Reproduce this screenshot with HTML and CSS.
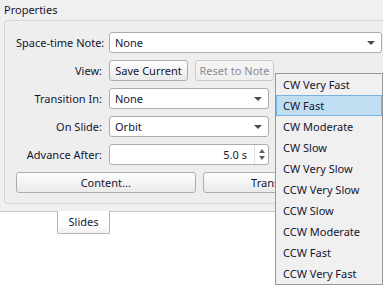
FILE: index.html
```html
<!DOCTYPE html>
<html lang="en">
<head>
    <meta charset="UTF-8">
    <title>Properties</title>
    <link rel="stylesheet" href="styles.css">
</head>
<body>
    <div class="dock">
        <div class="dock-title">Properties</div>
        <div class="group">
            <div class="form">
                <label>Space-time Note:</label>
                <div class="combo wide"><span>None</span><i class="arrow"></i></div>

                <label>View:</label>
                <div class="button-row">
                    <button class="btn">Save Current</button>
                    <button class="btn" disabled>Reset to Note</button>
                </div>

                <label>Transition In:</label>
                <div class="combo"><span>None</span><i class="arrow"></i></div>

                <label>On Slide:</label>
                <div class="combo"><span>Orbit</span><i class="arrow"></i></div>

                <label>Advance After:</label>
                <div class="spin">
                    <span class="spin-value">5.0 s</span>
                    <div class="spin-buttons">
                        <i class="arrow up"></i>
                        <i class="arrow"></i>
                    </div>
                </div>
            </div>
            <div class="actions">
                <button class="btn">Content...</button>
                <button class="btn">Transition Out...</button>
            </div>
        </div>
    </div>
    <div class="tabbar">
        <div class="tab">Slides</div>
    </div>

    <!-- open combo list for "On Slide" -->
    <ul class="popup">
        <li>CW Very Fast</li>
        <li class="current">CW Fast</li>
        <li>CW Moderate</li>
        <li>CW Slow</li>
        <li>CW Very Slow</li>
        <li>CCW Very Slow</li>
        <li>CCW Slow</li>
        <li>CCW Moderate</li>
        <li>CCW Fast</li>
        <li>CCW Very Fast</li>
    </ul>
</body>
</html>
```

FILE: styles.css
```css
body {
    margin: 0;
    width: 383px;
    height: 285px;
    overflow: hidden;
    position: relative;
    background: #ffffff;
    font-family: 'Noto Sans', 'Open Sans', sans-serif;
    font-size: 11px;
    color: #151530;
}
.dock {
    background: #f0f0f0;
    height: 211px;
    border-bottom: 1px solid #c4c4c4;
}
.dock-title {
    height: 20px;
    line-height: 20px;
    padding-left: 4px;
}
.group {
    margin-left: 4px;
    width: 366px;
    height: 161px;
    padding: 11px 11px 10px 11px;
    border: 1px solid #d6d6d6;
    border-radius: 3px;
    background: #eeeeee;
}
.form {
    display: grid;
    grid-template-columns: 86px 273px;
    column-gap: 7px;
    row-gap: 7px;
    align-items: center;
}
.form label {
    text-align: right;
    white-space: nowrap;
}
.combo, .spin {
    position: relative;
    display: flex;
    align-items: center;
    width: 160px;
    height: 21px;
    box-sizing: border-box;
    padding-left: 5px;
    background: #ffffff;
    border: 1px solid #acacac;
    border-radius: 3px;
}
.combo.wide {
    width: 273px;
}
.combo span {
    flex: 1;
}
.arrow {
    width: 0;
    height: 0;
    margin-right: 6px;
    border-left: 4px solid transparent;
    border-right: 4px solid transparent;
    border-top: 4px solid #4a4a4a;
}
.arrow.up {
    border-top: none;
    border-bottom: 4px solid #4a4a4a;
}
.spin {
    padding-left: 0;
}
.spin-value {
    flex: 1;
    text-align: right;
    padding-right: 7px;
}
.spin-buttons {
    display: flex;
    flex-direction: column;
    align-items: center;
    justify-content: center;
    gap: 3px;
    width: 13px;
    height: 100%;
    border-left: 1px solid #e0e0e0;
}
.spin-buttons .arrow {
    margin: 0;
    border-left-width: 3px;
    border-right-width: 3px;
    border-top-color: #606060;
    border-bottom-color: #606060;
}
.button-row {
    display: flex;
    gap: 7px;
}
.btn {
    width: 79px;
    height: 21px;
    padding: 0;
    font: inherit;
    color: inherit;
    white-space: nowrap;
    background: linear-gradient(#fdfdfd, #eaeaea);
    border: 1px solid #adadad;
    border-radius: 3px;
}
.btn:disabled {
    color: #8c8c96;
    border-color: #cacaca;
    background: linear-gradient(#f6f6f6, #efefef);
}
.actions {
    display: flex;
    gap: 7px;
    margin-top: 7px;
}
.actions .btn {
    flex: 1;
}
.tabbar {
    padding-left: 57px;
}
.tab {
    width: 51px;
    height: 22px;
    margin-top: -1px;
    line-height: 22px;
    text-align: center;
    background: linear-gradient(#ffffff 60%, #f2f2f2);
    border: 1px solid #b4b4b4;
    border-top: none;
    border-radius: 0 0 2px 2px;
}
.popup {
    position: absolute;
    left: 275px;
    top: 73px;
    width: 106px;
    margin: 0;
    padding: 0;
    list-style: none;
    background: #f0f0f0;
    border: 1px solid #979797;
}
.popup li {
    height: 21px;
    line-height: 21px;
    padding-left: 7px;
    white-space: nowrap;
}
.popup li.current {
    height: 19px;
    line-height: 19px;
    padding-left: 6px;
    background: #bfdef2;
    border: 1px solid #77b2e0;
}
```
